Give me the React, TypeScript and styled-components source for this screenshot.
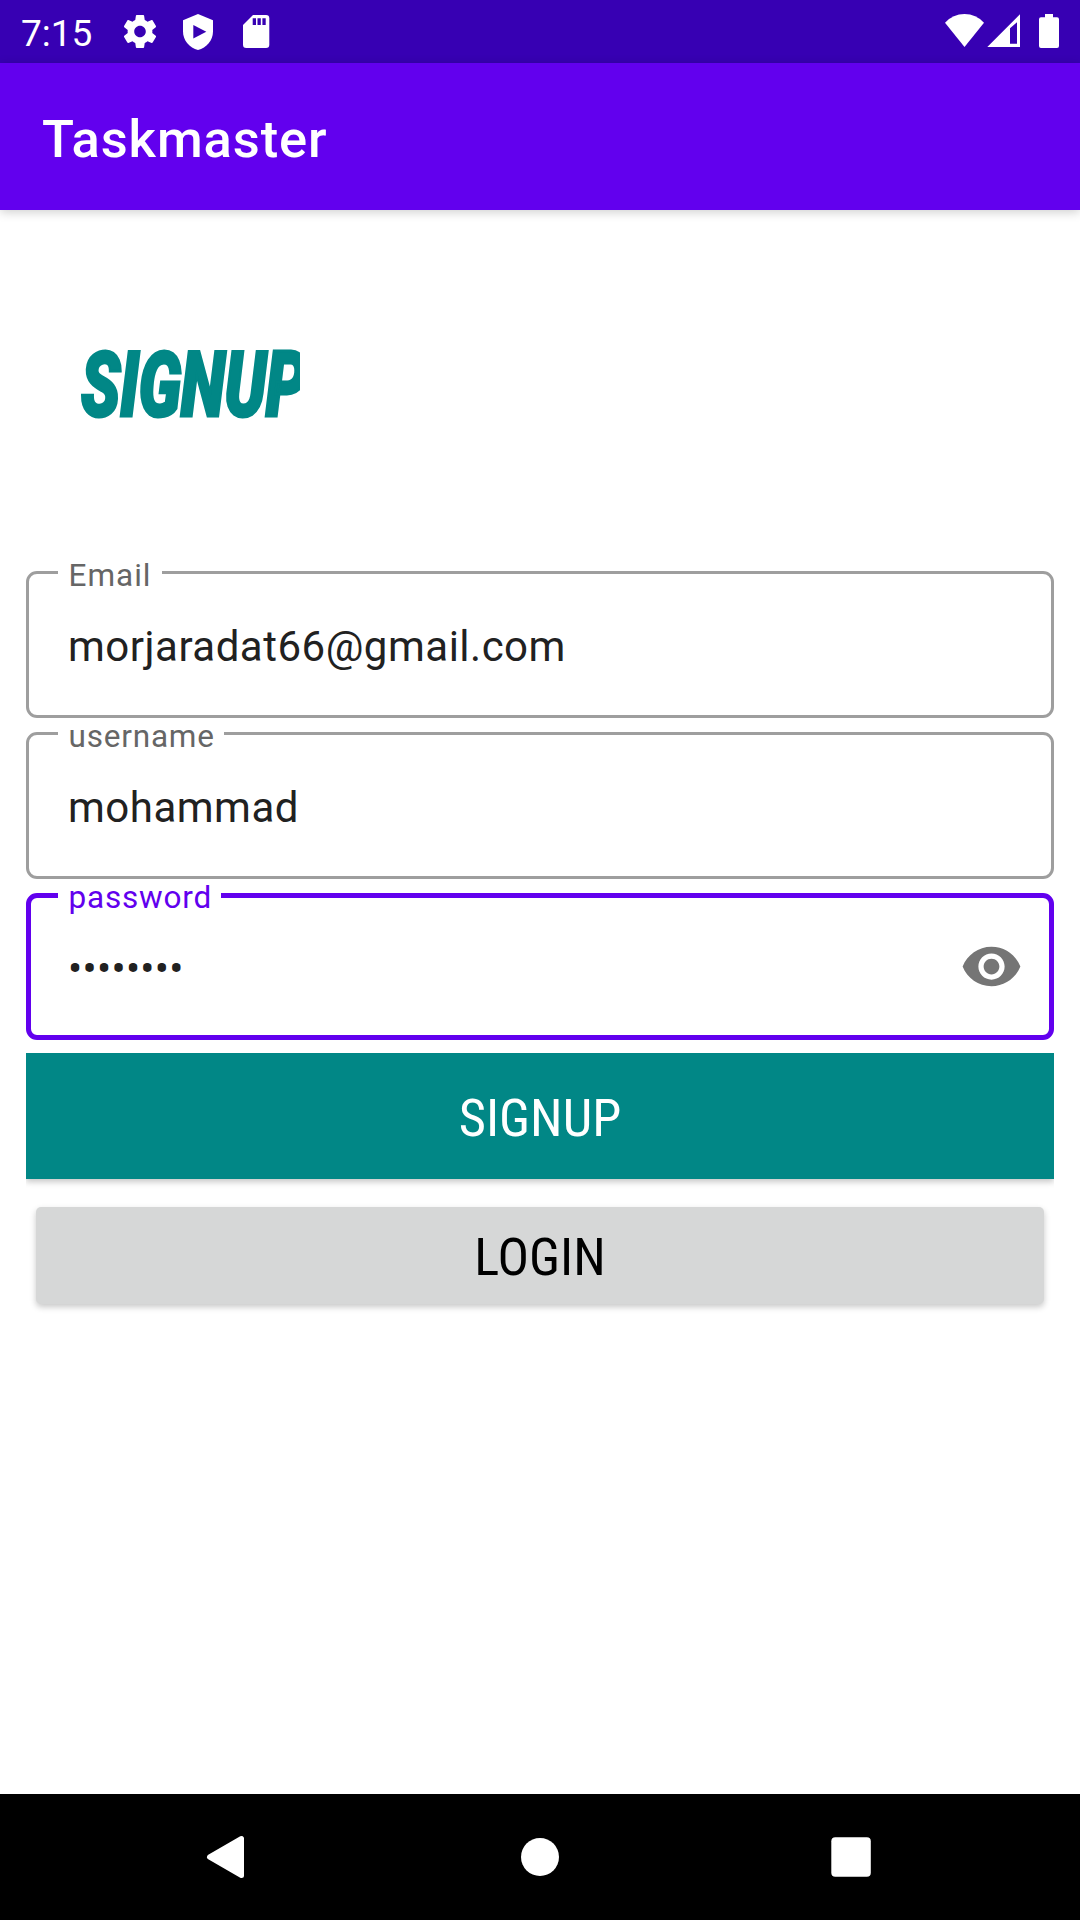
import React from "react";
import styled, { createGlobalStyle } from "styled-components";

const GlobalStyle = createGlobalStyle`
  *, *::before, *::after { box-sizing: border-box; }
  body { margin: 0; background: #fff; }
`;

const Screen = styled.div`
  display: flex;
  flex-direction: column;
  width: 1080px;
  height: 1920px;
  overflow: hidden;
  background: #fff;
  font-family: Roboto, "Liberation Sans", sans-serif;
`;

const StatusBar = styled.header`
  display: flex;
  align-items: flex-start;
  height: 63px;
  flex: none;
  padding: 0 20px 0 21px;
  background: #3700b3;
  color: #fff;
`;

const Clock = styled.span`
  width: 99px;
  font-size: 37px;
  line-height: 43px;
  padding-top: 12px;
`;

const StatusIcons = styled.div<{ $end?: boolean }>`
  display: flex;
  height: 63px;
  margin-left: ${(p) => (p.$end ? "auto" : "0")};
  svg { display: block; }
`;

const AppBar = styled.div`
  display: flex;
  align-items: center;
  height: 147px;
  flex: none;
  padding: 4px 42px 0;
  background: #6200ee;
  box-shadow: 0 2px 10px rgba(0, 0, 0, 0.2);
`;

const AppTitle = styled.h1`
  margin: 0;
  color: #fff;
  font-size: 52.5px;
  font-weight: 500;
  line-height: 62px;
  letter-spacing: 0.9px;
`;

const Content = styled.main`
  display: flex;
  flex-direction: column;
  flex: 1;
  padding: 121px 26px 0;
`;

const Heading = styled.h2`
  width: 221px;
  height: 105px;
  margin: 0 0 135px 53px;
  padding-left: 2px;
  overflow: hidden;
  color: #018786;
  line-height: 109px;
  white-space: nowrap;
`;

const HeadingText = styled.span`
  display: inline-block;
  font-size: 91px;
  font-weight: 900;
  font-style: italic;
  letter-spacing: -0.5px;
  -webkit-text-stroke: 3px #018786;
  transform: scaleX(0.71);
  transform-origin: 0 50%;
`;

const Form = styled.form`
  display: flex;
  flex-direction: column;
`;

const Field = styled.label<{ $active?: boolean }>`
  position: relative;
  display: flex;
  align-items: center;
  justify-content: space-between;
  height: 147px;
  margin-bottom: 14px;
  padding: 0 ${(p) => (p.$active ? 26 : 39)}px 0 ${(p) => (p.$active ? 37 : 39)}px;
  border: ${(p) => (p.$active ? "5px solid #6200ee" : "3px solid #9e9e9e")};
  border-radius: 11px;
`;

const FieldLabel = styled.span<{ $active?: boolean; $width: number }>`
  position: absolute;
  top: ${(p) => (p.$active ? -19 : -17)}px;
  left: ${(p) => (p.$active ? 27 : 29)}px;
  width: ${(p) => p.$width}px;
  padding-left: 10.5px;
  background: linear-gradient(transparent 12px, #fff 12px);
  color: ${(p) => (p.$active ? "#6200ee" : "#666")};
  font-size: 31.5px;
  line-height: 37px;
  height: 30px;
  letter-spacing: ${(p) => (p.$width > 120 ? 0.8 : 1)}px;
  white-space: nowrap;
`;

const Value = styled.span`
  color: #212121;
  font-size: 42px;
  line-height: 50px;
  padding-top: 5px;
  letter-spacing: 0.5px;
`;

const Secret = styled(Value)`
  letter-spacing: 0.3px;
`;

const Action = styled.button<{ $primary?: boolean }>`
  display: flex;
  align-items: center;
  justify-content: center;
  height: ${(p) => (p.$primary ? 126 : 97)}px;
  margin: ${(p) => (p.$primary ? "-1px 0 0" : "28px 10px 0")};
  padding: ${(p) => (p.$primary ? 3 : 2)}px 0 0;
  border: 0;
  border-radius: ${(p) => (p.$primary ? 0 : 5)}px;
  background: ${(p) => (p.$primary ? "#018786" : "#d6d7d7")};
  box-shadow: 0 3px 6px rgba(0, 0, 0, 0.22);
  clip-path: ${(p) => (p.$primary ? "inset(0 0 -12px 0)" : "none")};
  color: ${(p) => (p.$primary ? "#fff" : "#000")};
  font-family: "Roboto Condensed", Roboto, sans-serif;
  font-stretch: 75%;
  font-size: 52.5px;
  line-height: 62px;
`;

const NavBar = styled.nav`
  display: flex;
  justify-content: center;
  height: 126px;
  flex: none;
  background: #000;
`;

export default function App() {
  return (
    <Screen>
      <GlobalStyle />
      <StatusBar>
        <Clock>7:15</Clock>
        <StatusIcons>
          <svg width="40" height="63" viewBox="120 0 40 63" fill="#fff">
            <path
              transform="translate(120.2 11.7) scale(1.65)"
              d="M19.43 12.98c.04-.32.07-.64.07-.98s-.03-.66-.07-.98l2.11-1.65c.19-.15.24-.42.12-.64l-2-3.46c-.12-.22-.39-.3-.61-.22l-2.49 1c-.52-.4-1.08-.73-1.69-.98l-.38-2.65C14.46 2.18 14.25 2 14 2h-4c-.25 0-.46.18-.49.42l-.38 2.65c-.61.25-1.17.59-1.69.98l-2.49-1c-.23-.09-.49 0-.61.22l-2 3.46c-.13.22-.07.49.12.64l2.11 1.65c-.04.32-.07.65-.07.98s.03.66.07.98l-2.11 1.65c-.19.15-.24.42-.12.64l2 3.46c.12.22.39.3.61.22l2.49-1c.52.4 1.08.73 1.69.98l.38 2.65c.03.24.24.42.49.42h4c.25 0 .46-.18.49-.42l.38-2.65c.61-.25 1.17-.59 1.69-.98l2.49 1c.23.09.49 0 .61-.22l2-3.46c.12-.22.07-.49-.12-.64l-2.11-1.65zM12 15.5c-1.93 0-3.5-1.57-3.5-3.5s1.57-3.5 3.5-3.5 3.5 1.57 3.5 3.5-1.57 3.5-3.5 3.5z"
            />
          </svg>
          <svg width="70" height="63" viewBox="160 0 70 63">
            <path d="M198 14 213 20.2V31.5C213 40.2 206.5 48 198 50 189.500 48 183 40.200 183 31.500V20.200Z" fill="#fff" />
            <path d="M193.300 25V38.500L206.300 31.700Z" fill="#3700b3" />
          </svg>
          <svg width="50" height="63" viewBox="230 0 50 63">
            <path d="M253 15H266Q269.300 15 269.300 18.300V44.700Q269.300 48 266 48H246.300Q243 48 243 44.700V25Z" fill="#fff" />
            <path d="M252.700 18.300h3.300v6.700h-3.300zM257.500 18.300h3.300v6.700h-3.300zM262.400 18.300h3.300v6.700h-3.300z" fill="#3700b3" />
          </svg>
        </StatusIcons>
        <StatusIcons $end>
          <svg width="120" height="63" viewBox="940 0 120 63" fill="#fff">
            <path d="M945 22.700Q953 14 964.500 14T984 22.700L964.500 47Z" />
            <path fillRule="evenodd" d="M987.300 47 1020 14.300V47ZM1010 28.300V43.700H1017V22.300Z" />
            <path d="M1045 14h8v3.300h4Q1059 17.300 1059 19.300V46Q1059 48 1057 48H1041Q1039 48 1039 46V19.300Q1039 17.300 1041 17.300h4Z" />
          </svg>
        </StatusIcons>
      </StatusBar>
      <AppBar>
        <AppTitle>Taskmaster</AppTitle>
      </AppBar>
      <Content>
        <Heading>
          <HeadingText>SIGNUP</HeadingText>
        </Heading>
        <Form>
          <Field>
            <FieldLabel $width={104}>Email</FieldLabel>
            <Value>morjaradat66@gmail.com</Value>
          </Field>
          <Field>
            <FieldLabel $width={166}>username</FieldLabel>
            <Value>mohammad</Value>
          </Field>
          <Field $active>
            <FieldLabel $active $width={163}>password</FieldLabel>
            <Secret>••••••••</Secret>
            <svg width="63" height="63" viewBox="0 0 24 24" fill="#757575">
              <path d="M12 4.500C7 4.500 2.730 7.610 1 12c1.730 4.390 6 7.500 11 7.500s9.270-3.110 11-7.500c-1.730-4.390-6-7.500-11-7.500zM12 17c-2.760 0-5-2.240-5-5s2.240-5 5-5 5 2.240 5 5-2.240 5-5 5zm0-8c-1.660 0-3 1.340-3 3s1.340 3 3 3 3-1.340 3-3-1.340-3-3-3z" />
            </svg>
          </Field>
          <Action type="button" $primary>SIGNUP</Action>
          <Action type="button">LOGIN</Action>
        </Form>
      </Content>
      <NavBar>
        <svg width="1080" height="126" viewBox="0 1794 1080 126" fill="#fff" stroke="#fff" strokeLinejoin="round">
          <path d="M241.500 1838.500V1875.500L209.500 1857Z" strokeWidth="5" />
          <circle cx="540" cy="1857" r="19" stroke="none" />
          <rect x="831.300" y="1837.300" width="39.500" height="39.500" rx="4" stroke="none" />
        </svg>
      </NavBar>
    </Screen>
  );
}
